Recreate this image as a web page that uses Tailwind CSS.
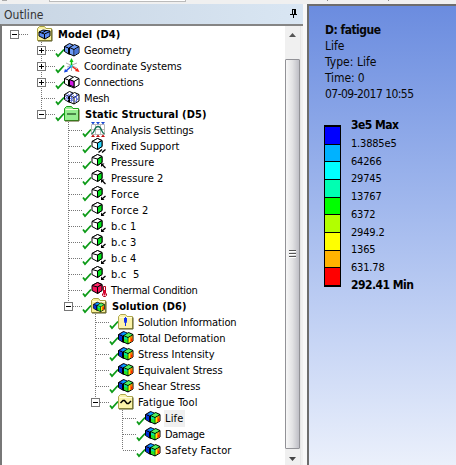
<!DOCTYPE html>
<html lang="en">
<head>
<meta charset="utf-8">
<title>Outline</title>
<script src="https://cdn.jsdelivr.net/npm/@tailwindcss/browser@4"></script>
</head>
<body class="w-[456px] h-[465px] overflow-hidden bg-[#f0f0f0] font-['DejaVu_Sans_Condensed','DejaVu_Sans',sans-serif] text-[11px] text-black flex flex-col">
<div class="h-1 shrink-0 flex bg-[#f0f0f0]">
  <div class="w-[5px] h-px bg-[#aaa] ml-0.5"></div>
  <div class="ml-[42px] w-[137px] h-[2px] bg-white border-l border-b border-r border-[#bbb]"></div>
  <div class="ml-[141px] w-[62px] h-px border-l border-r border-[#888]"></div>
</div>
<div class="flex grow min-h-0">
  <section class="w-[303px] shrink-0 flex flex-col">
    <header class="h-5 shrink-0 flex items-center justify-between pl-1 pr-[5px] bg-linear-to-r from-[#c8d5e3] to-[#d9e6f3] text-[#333]">
      <span class="fit whitespace-nowrap text-[12px] leading-5 mt-px" data-w="39">Outline</span>
      <svg class="w-2 h-[10px]" viewBox="0 0 8 10" shape-rendering="crispEdges"><path d="M2 0h4v1h-4zM2 1h1v4h-1zM4 1h2v4h-2zM0 5h7v1h-7zM3 6h1v3h-1z" fill="#000"/></svg>
    </header>
    <div class="grow min-h-0 flex border-t-2 border-l-2 border-t-[#858585] border-l-[#777] bg-white">
      <div id="tree" class="grow flex flex-col"></div>
      <div class="w-[16px] shrink-0 flex flex-col items-center bg-[#f0f0f0] border-r border-[#e6e6e6]">
        <svg class="h-[33px] w-[9px] shrink-0" viewBox="0 0 9 33"><path d="M1 11L4.500 7L8 11z" fill="#555"/></svg>
        <div class="grow w-[15px] border border-[#929297] rounded-[1px] bg-linear-to-r from-[#f7f7f7] via-[#e2e2e4] to-[#bfbfc6] flex flex-col items-center justify-center gap-px">
          <i class="w-[7px] h-[2px] border-t border-t-[#555] bg-white"></i><i class="w-[7px] h-[2px] border-t border-t-[#555] bg-white"></i><i class="w-[7px] h-[2px] border-t border-t-[#555] bg-white"></i>
        </div>
        <svg class="h-[16px] w-[9px] shrink-0" viewBox="0 0 9 16"><path d="M1 8L4.500 12L8 8z" fill="#444"/></svg>
      </div>
      <div class="w-[2px] bg-[#f0f0f0]"></div>
    </div>
  </section>
  <div class="w-1 shrink-0 bg-[#f8f8f8]"></div>
  <section class="grow border-t-2 border-l-2 border-[#6d6d6d] bg-linear-to-b from-[#6b8cdf] to-[#ebf0fb] pl-[16px] pt-[16px]">
    <div class="flex flex-col whitespace-nowrap leading-4 text-[#080808] [&>*]:h-4 [&>*]:self-start">
      <b class="fit text-[12px]" data-w="55">D: fatigue</b>
      <span class="fit text-[12px]" data-w="19">Life</span>
      <span class="fit text-[12px]" data-w="51">Type: Life</span>
      <span class="fit text-[12px]" data-w="39">Time: 0</span>
      <span class="fit text-[12px]" data-w="88">07-09-2017 10:55</span>
    </div>
    <div class="flex mt-[15px]">
      <div class="mt-[8px] -ml-px w-[17px] h-[162px] border border-t-2 border-b-2 border-black flex flex-col divide-y divide-black [&>*]:grow">
        <div class="bg-[#0000ff]"></div><div class="bg-[#00b2ff]"></div><div class="bg-[#00ffff]"></div><div class="bg-[#00ffb2]"></div><div class="bg-[#00ff00]"></div><div class="bg-[#b2ff00]"></div><div class="bg-[#ffff00]"></div><div class="bg-[#ffb200]"></div><div class="bg-[#ff0000]"></div>
      </div>
      <div class="ml-[10px] w-[70px] flex flex-col whitespace-nowrap leading-[17.75px] [&>*]:h-[17.75px] [&>*]:self-start">
        <b class="fit text-[12px]" data-w="47">3e5 Max</b>
        <span class="fit" data-w="45">1.3885e5</span>
        <span class="fit" data-w="30">64266</span>
        <span class="fit" data-w="30">29745</span>
        <span class="fit" data-w="30">13767</span>
        <span class="fit" data-w="24">6372</span>
        <span class="fit" data-w="33">2949.2</span>
        <span class="fit" data-w="24">1365</span>
        <span class="fit" data-w="33">631.78</span>
        <b class="fit text-[12px]" data-w="62">292.41 Min</b>
      </div>
    </div>
  </section>
</div>
<script>
// Icons are drawn in a 16 x 16 box.
const folder = (c, s) => `<path d="M.5 14.500V2.500L2.500 .5H7.500L9 2.500H14.500V14.500z" fill="${c}" stroke="${s}"/><path d="M1 15H15V3.500" fill="none" stroke="#555520"/><path d="M1.500 3.500H14" stroke="#fffde0"/>`;
const up = s => `<g transform="translate(0,-1)">${s}</g>`;
const cube = (a, b, t) => up(`<path d="M1 4.500L6.500 1.500L11 3.500V9.500L6.500 12.500L1 9.500z" fill="${a}" stroke="#000"/><path d="M1 4.500L6.500 1.500L11 3.500L6.500 6z" fill="${t}" stroke="#000"/><path d="M6.500 6L11 3.500V9.500L6.500 12.500z" fill="${b}" stroke="#000"/>`);
const pair = (a, b, t) => `<path d="M.5 4.500L5.500 1.500L9 3V11L5.500 12.500L.5 9.500z" fill="${a}" stroke="#000"/><path d="M.5 4.500L4.500 6V12" fill="none" stroke="#000"/><path d="M5.500 5.500L10.500 2.500L15 4.500V11L10 14L5.500 12z" fill="${b}" stroke="#000"/><path d="M5.500 5.500L10 7.500L15 4.500M10 7.500V14" fill="none" stroke="#000"/>${t}`;
const contour = pair('#1648df', '#22dd33', '<path d="M1 5L4 7V11L1 9z" fill="#0030dd"/><path d="M3 4L6 2.500L9 3L5.500 5z" fill="#00aaff"/><path d="M6 6.500L9.500 8V10L6 9z" fill="#00e5a0"/><path d="M6 9L9.500 10V13L6 11.500z" fill="#25e51f"/><path d="M6.500 5.500L10.500 3.200L14 4.800L10 6.800z" fill="#53f060"/><path d="M10.500 8L12 7V12L10.500 13z" fill="#ffe900"/><path d="M12 7L14.500 5.500V11L12 12.200z" fill="#ff7b00"/><path d="M13 9L14.500 8V11L13 11.800z" fill="#ff2000"/>');
const inArrow = '<path d="M10 9.500H13.500L10 13z" fill="#000"/><path d="M11 10.500L14.500 14" fill="none" stroke="#000" stroke-width="1.300"/>';
const outArrow = '<path d="M10 10.500V14H13.500z" fill="#000"/><path d="M11 13L14.500 10" fill="none" stroke="#000" stroke-width="1.300"/>';
const green = cube('#fff', '#00e619', '#fff');
const icons = {
  model: folder('#f7f0a0', '#a8a040') + up('<path d="M2 7L6 5L13 6V11L8 14L2 11z" fill="#5c8cf0" stroke="#000"/><path d="M2 7L7.500 9L13 6.500M7.500 9V14M5 8L9 5.500" fill="none" stroke="#000"/>'),
  geometry: pair('#6f9df8', '#6f9df8', '<path d="M10.500 8L14.500 5.500V10.800L10.500 13.200z" fill="#4a76d8"/>'),
  coords: '<path d="M2 5L13 10M13 5L3 9M7.500 8V13" stroke="#999" stroke-width=".8"/><path d="M7.500 8V3" stroke="#10c010" stroke-width="1.500"/><path d="M5.500 4L7.500 0L9.500 4z" fill="#10c010"/><path d="M7.500 8L2 13" stroke="#1848e0" stroke-width="1.500"/><path d="M0 14.500L1 11L4 13.500z" fill="#1848e0"/><path d="M7.500 8L13 12" stroke="#f02010" stroke-width="1.500"/><path d="M15.500 14L11 13L13.500 10z" fill="#f02010"/><path d="M6.500 7H8.500V9.500H6.500z" fill="#20d8e8"/>',
  connections: pair('#fff', '#fff', '<path d="M5.500 5.500L10 7.500V13L5.500 11z" fill="#d418e8" stroke="#000"/>'),
  mesh: pair('#fff', '#fff', '<path d="M1 6L5 10M1 9L8 3M3 3L9 9M6 8L10 12M6 11L14 5M8 4L14 10M11 12L15 7M12.500 4V12M3 5V11M7.500 5V12" stroke="#5364dc" stroke-width=".8"/>'),
  static: folder('#97ef91', '#18a018') + '<path d="M3 8H12" stroke="#184018" stroke-width="1.200"/>',
  settings: '<path d="M.5 2.500H13.500V12.500H.5zM.5 7.500H13.500M4.500 3V12M9.500 3V12" fill="#fff" stroke="#bbb"/><path d="M.5 12C4 11 3 4.500 7 4.500S10 11 13.500 12" fill="none" stroke="#147050" stroke-width="1.300"/><path d="M0 0H4L2 2.500zM5 0H9L7 2.500zM10 0H14L12 2.500z" fill="#1644d0"/><path d="M0 15H4L2 12.500zM5 15H9L7 12.500zM10 15H14L12 12.500z" fill="#c01010"/>',
  fixed: cube('#fff', '#25d6ff', '#fff') + '<path d="M7.500 14.500L11 11.500M11 14.500L14.500 11.500" stroke="#000" stroke-width="1.400"/>',
  pressure: green + inArrow,
  force: green + outArrow,
  thermal: cube('#f51258', '#f51258', '#ff2868') + '<path d="M12.500 4.500H14.500V11L15.500 12V13.500L14.500 14.500H12.500L11.500 13.500V12L12.500 11z" fill="#fff" stroke="#b00020"/><path d="M13.500 8V13.500" stroke="#e00030" stroke-width="2"/>',
  solution: folder('#f7ef99', '#a8a040') + `<g transform="translate(2,3) scale(.76)">${contour}</g>`,
  info: folder('#fbf3a9', '#b0a850') + up('<path d="M7.500 4V13" stroke="#1030ee"/><path d="M6 5H9V8L8.500 10H6.500L6 8z" fill="#1030ee"/>'),
  contour,
  fatigue: folder('#fbf3a9', '#b0a850') + up('<path d="M2.500 10L5 7.500L6.500 7.500L9 10.500H10.500L13 8" fill="none" stroke="#000" stroke-width="1.500"/>')
};
// level, icon, label, label width, expander sign, last child
const rows = [
  [0,'model','Model (D4)',62,'-',1],
  [1,'geometry','Geometry',47,'+'],
  [1,'coords','Coordinate Systems',97,'+'],
  [1,'connections','Connections',59,'+'],
  [1,'mesh','Mesh',25],
  [1,'static','Static Structural (D5)',121,'-',1],
  [2,'settings','Analysis Settings',82],
  [2,'fixed','Fixed Support',68],
  [2,'pressure','Pressure',43],
  [2,'pressure','Pressure 2',52],
  [2,'force','Force',28],
  [2,'force','Force 2',37],
  [2,'force','b.c 1',25],
  [2,'force','b.c 3',25],
  [2,'force','b.c 4',25],
  [2,'force','b.c\u00a0 5',28],
  [2,'thermal','Thermal Condition',86],
  [2,'solution','Solution (D6)',74,'-',1],
  [3,'info','Solution Information',98],
  [3,'contour','Total Deformation',87],
  [3,'contour','Stress Intensity',76],
  [3,'contour','Equivalent Stress',84],
  [3,'contour','Shear Stress',62],
  [3,'fatigue','Fatigue Tool',59,'-',1],
  [4,'contour','Life',18],
  [4,'contour','Damage',39],
  [4,'contour','Safety Factor',66,'',1]
];
document.getElementById('tree').innerHTML = rows.map(([lv, ic, label, w, sign, last]) => {
  const W = 26 + 27 * lv, c = W - 13.5;
  let s = `<path d="M${c} 8.500H${W + (lv ? 0 : 1)}" stroke="#777" stroke-dasharray="1 1"/>`;
  if (lv) s += `<path d="M${c} 0V${last ? 8 : 16}" stroke="#777" stroke-dasharray="1 1"/>`;
  if (sign) s += `<path d="M${c-4} 4.500h8v8h-8z" fill="#fff" stroke="#777"/><path d="M${c-2.5} 8.500h5${sign === '+' ? `M${c} 6v5` : ''}" stroke="#000"/>`;
  const bold = lv === 0 || ic === 'static' || ic === 'solution';
  const check = lv ? '<path d="M1 11.500L3 14L9 7.500" fill="none" stroke="#0b9a16" stroke-width="1.800"/>' : '';
  return `<div class="flex h-4 shrink-0 items-center">
    <svg class="h-4 shrink-0" width="${W}" height="16" shape-rendering="crispEdges">${s}</svg>
    <svg class="w-[9px] h-4 shrink-0 overflow-visible" viewBox="0 0 9 16">${check}</svg>
    <svg class="w-4 h-4 shrink-0 ${bold ? 'mr-[5px]' : 'mr-1'} overflow-visible" viewBox="0 0 16 16">${icons[ic]}</svg>
    <span class="${label === 'Life' ? 'bg-[#f0f0f0] shadow-[0_0_0_1px_#f0f0f0]' : ''} h-[15px] leading-[15px] whitespace-nowrap"><span class="fit ${bold ? 'font-bold' : ''}" data-w="${w}">${label}</span></span>
  </div>`;
}).join('');
// Spread each label's letters to its column width; repeated because advances may round.
function fit() {
  document.querySelectorAll('.fit').forEach(e => {
    const n = e.textContent.length;
    let ls = 0;
    e.style.letterSpacing = '0px';
    for (let i = 0; i < 5; i++) {
      ls += (+e.dataset.w + 0.5 - e.getBoundingClientRect().width) / n;
      e.style.letterSpacing = ls + 'px';
    }
  });
}
fit();
window.addEventListener('load', fit);
document.fonts.ready.then(fit);
</script>
</body>
</html>
